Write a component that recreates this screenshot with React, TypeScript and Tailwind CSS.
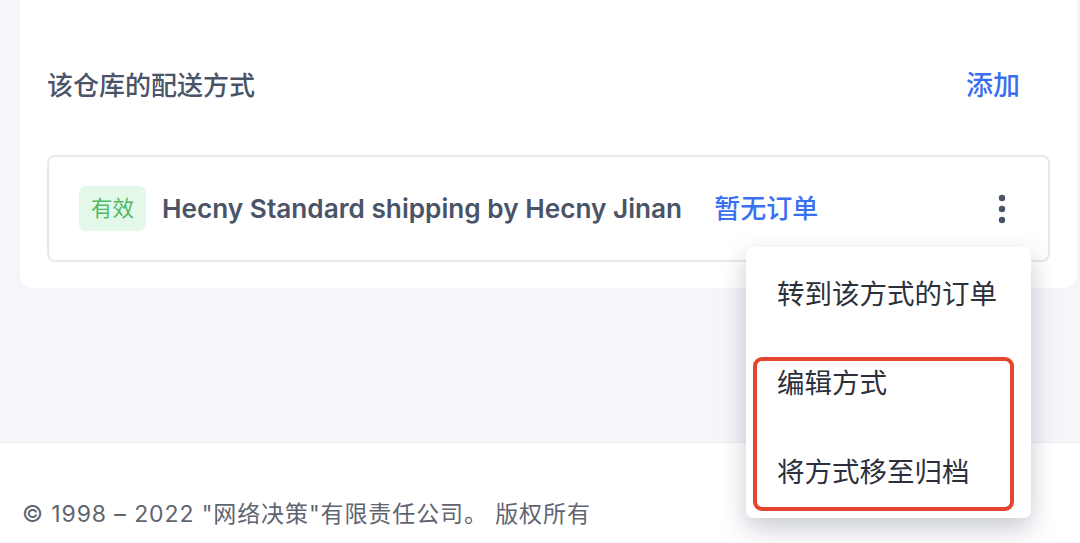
import { useState } from "react";

const font = { fontFamily: '"Inter", "Noto Sans CJK SC", sans-serif' };

function Kebab() {
  return (
    <svg width="8" height="30" viewBox="0 0 8 30" className="text-[#4a5468]">
      <circle cx="4" cy="4" r="3.2" fill="currentColor" />
      <circle cx="4" cy="15" r="3.2" fill="currentColor" />
      <circle cx="4" cy="26" r="3.2" fill="currentColor" />
    </svg>
  );
}

export default function App() {
  const [open] = useState(true);
  const items = ["转到该方式的订单", "编辑方式", "将方式移至归档"];

  return (
    <div className="relative flex h-[543px] w-[1080px] flex-col overflow-hidden bg-[#f5f6fa]" style={font}>
      <div className="ml-[20px] mr-[3px] rounded-b-[14px] bg-white px-[27px] pb-[26px] pt-[68px]">
        <div className="flex items-center justify-between pr-[30px]">
          <h2 className="text-[26px] font-medium leading-[36px] text-[#4a5468]">该仓库的配送方式</h2>
          <button className="text-[27px] font-medium leading-[36px] text-[#3b6ff2]">添加</button>
        </div>

        <div className="mt-[51px] flex h-[107px] items-center rounded-[8px] border-2 border-[#e7e9ee] pl-[30px] pr-[42px]">
          <span className="rounded-[7px] bg-[#e4f8e9] px-[12px] py-[6px] text-[21.5px] leading-[33px] text-[#4fb865]">
            有效
          </span>
          <span className="ml-[16px] text-[26.2px] font-semibold text-[#4a5468]">
            Hecny Standard shipping by Hecny Jinan
          </span>
          <span className="ml-[32px] text-[26px] font-medium text-[#3b6ff2]">暂无订单</span>
          <button className="ml-auto">
            <Kebab />
          </button>
        </div>
      </div>

      <div className="flex-1" />

      <footer className="h-[101px] border-t border-[#eceef2] bg-white pl-[22px] pt-[55px]">
        <p className="text-[23px] leading-[32px] tracking-[0.9px] text-[#5f6570]">
          © 1998 – 2022 "网络决策"有限责任公司。 版权所有
        </p>
      </footer>

      {open && (
        <div className="absolute left-[746px] top-[247px] h-[271px] w-[285px] rounded-[7px] bg-white pt-[3px] shadow-[0_10px_26px_rgba(40,50,80,0.26)]">
          {items.map((label) => (
            <div key={label} className="flex h-[89px] items-center pl-[31px] text-[27.5px] text-[#2b303b]">
              {label}
            </div>
          ))}
          <div className="absolute left-[7px] top-[110px] h-[154px] w-[261px] rounded-[9px] border-[4px] border-[#e5452f]" />
        </div>
      )}
    </div>
  );
}
